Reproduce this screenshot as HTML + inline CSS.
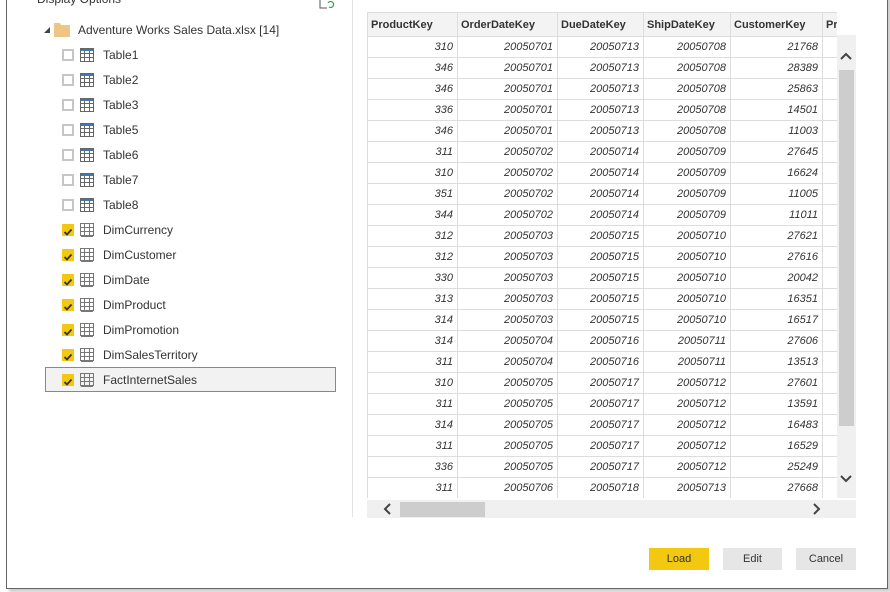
<!DOCTYPE html>
<html><head><style>
*{margin:0;padding:0;box-sizing:border-box}
body{width:890px;height:592px;background:#fff;font-family:"Segoe UI","Liberation Sans",sans-serif;position:relative;overflow:hidden;color:#333}
.frame{position:absolute;left:6px;top:-5px;width:882px;height:594px;border:1.5px solid #666;box-shadow:3px 3px 3px #ccc}
.abs{position:absolute}
.item{position:absolute;left:62px;height:20px;font-size:12px;line-height:20px}
.cb{position:absolute;left:0;top:4px;width:12px;height:12px;border:2px solid #c6c6c6;background:#fff}
.cb.on{background:#f2c811;border:none}
.ti{position:absolute;left:18px;top:3px}
.lbl{position:absolute;left:41px;top:0;white-space:nowrap;color:#333}
table{border-collapse:collapse;font-size:11px;table-layout:fixed}
td{border:1px solid #ddd;height:21px;padding:0 4px;text-align:right;font-style:italic;color:#333;white-space:nowrap;overflow:hidden}
th{border:1px solid #ddd;height:24px;padding:0 3px;text-align:left;font-weight:bold;background:#f3f3f3;color:#333;white-space:nowrap;overflow:hidden}
.btn{position:absolute;top:548px;height:22px;font-size:11px;line-height:22px;text-align:center;background:#e6e6e6;color:#333}
</style></head><body>
<div class="frame"></div>
<div class="abs" style="left:37px;top:-8px;font-size:12px;color:#333">Display Options</div>
<svg class="abs" style="left:319px;top:0" width="16" height="10"><path d="M1 0V8H8" stroke="#555" fill="none"/><path d="M9 3a3 3 0 1 1 1 4" stroke="#3a9a5a" fill="none" stroke-width="1.2"/></svg>
<div class="abs" style="left:352px;top:0;width:1px;height:517px;background:#e3e3e3"></div>
<svg class="abs" style="left:43px;top:26px" width="8" height="8"><path d="M7 1V7H1Z" fill="#444"/></svg>
<svg class="abs" style="left:54px;top:22px" width="16" height="15"><path d="M0 1H6L7 3H16V15H0Z" fill="#eec683"/></svg>
<div class="abs" style="left:78px;top:20px;font-size:12px;line-height:20px">Adventure Works Sales Data.xlsx [14]</div>
<div class="abs" style="left:45px;top:367px;width:291px;height:25px;border:1px solid #888;background:#f2f2f2"></div>
<div id="items"></div>
<div class="abs" style="left:367px;top:12px;width:470px;height:486px;overflow:hidden">
<table id="tb" style="width:530px"><colgroup><col style="width:90px"><col style="width:100px"><col style="width:86px"><col style="width:87px"><col style="width:92px"><col style="width:75px"></colgroup></table>
</div>
<div class="abs" style="left:837px;top:35px;width:19px;height:463px;background:#f0f0f0"></div>
<div class="abs" style="left:839px;top:70px;width:15px;height:356px;background:#cdcdcd"></div>
<svg class="abs" style="left:840px;top:52px" width="12" height="8"><path d="M1 7L6 2L11 7" stroke="#444" stroke-width="2" fill="none"/></svg>
<svg class="abs" style="left:840px;top:475px" width="12" height="8"><path d="M1 1L6 6L11 1" stroke="#444" stroke-width="2" fill="none"/></svg>
<div class="abs" style="left:367px;top:500px;width:489px;height:18px;background:#f0f0f0"></div>
<div class="abs" style="left:400px;top:502px;width:85px;height:15px;background:#cdcdcd"></div>
<svg class="abs" style="left:383px;top:503px" width="8" height="12"><path d="M7 1L2 6L7 11" stroke="#444" stroke-width="2" fill="none"/></svg>
<svg class="abs" style="left:813px;top:503px" width="8" height="12"><path d="M1 1L6 6L1 11" stroke="#444" stroke-width="2" fill="none"/></svg>
<div class="btn" style="left:649px;width:60px;background:#f2c811">Load</div>
<div class="btn" style="left:723px;width:59px">Edit</div>
<div class="btn" style="left:796px;width:60px">Cancel</div>
<script>
var names=["Table1","Table2","Table3","Table5","Table6","Table7","Table8","DimCurrency","DimCustomer","DimDate","DimProduct","DimPromotion","DimSalesTerritory","FactInternetSales"];
var h="";
names.forEach(function(n,i){var on=i>=7;var y=45+i*25;
var icon=on?'<svg class="ti" width="14" height="14"><path d="M0.5 0.5H13.5V12.5H0.5ZM0.5 4.5H13.5M0.5 8.5H13.5M4.5 0.5V12.5M9.5 0.5V12.5M1 13.5H13" stroke="#777" fill="none"/></svg>':'<svg class="ti" width="14" height="14"><rect x="0" y="0" width="14" height="3" fill="#3c78b4"/><path d="M0.5 0.5H13.5V13.5H0.5ZM0.5 5.5H13.5M0.5 9.5H13.5M4.5 3V13.5M9.5 3V13.5" stroke="#666" fill="none"/></svg>';
var cb=on?'<div class="cb on"><svg width="12" height="12"><path d="M2.5 6L5 8.5L9.5 3.5" stroke="#333" stroke-width="1.8" fill="none"/></svg></div>':'<div class="cb"></div>';
h+='<div class="item" style="top:'+y+'px">'+cb+icon+'<div class="lbl">'+n+'</div></div>';});
document.getElementById("items").innerHTML=h;
var rows=[[310,20050701,20050713,20050708,21768],[346,20050701,20050713,20050708,28389],[346,20050701,20050713,20050708,25863],[336,20050701,20050713,20050708,14501],[346,20050701,20050713,20050708,11003],[311,20050702,20050714,20050709,27645],[310,20050702,20050714,20050709,16624],[351,20050702,20050714,20050709,11005],[344,20050702,20050714,20050709,11011],[312,20050703,20050715,20050710,27621],[312,20050703,20050715,20050710,27616],[330,20050703,20050715,20050710,20042],[313,20050703,20050715,20050710,16351],[314,20050703,20050715,20050710,16517],[314,20050704,20050716,20050711,27606],[311,20050704,20050716,20050711,13513],[310,20050705,20050717,20050712,27601],[311,20050705,20050717,20050712,13591],[314,20050705,20050717,20050712,16483],[311,20050705,20050717,20050712,16529],[336,20050705,20050717,20050712,25249],[311,20050706,20050718,20050713,27668]];
var t='<tr><th>ProductKey</th><th>OrderDateKey</th><th>DueDateKey</th><th>ShipDateKey</th><th>CustomerKey</th><th>Pro</th></tr>';
rows.forEach(function(r){t+='<tr>'+r.map(function(v){return'<td>'+v+'</td>'}).join('')+'<td>1</td></tr>'});
document.getElementById("tb").insertAdjacentHTML("beforeend",t);
</script>
</body></html>
